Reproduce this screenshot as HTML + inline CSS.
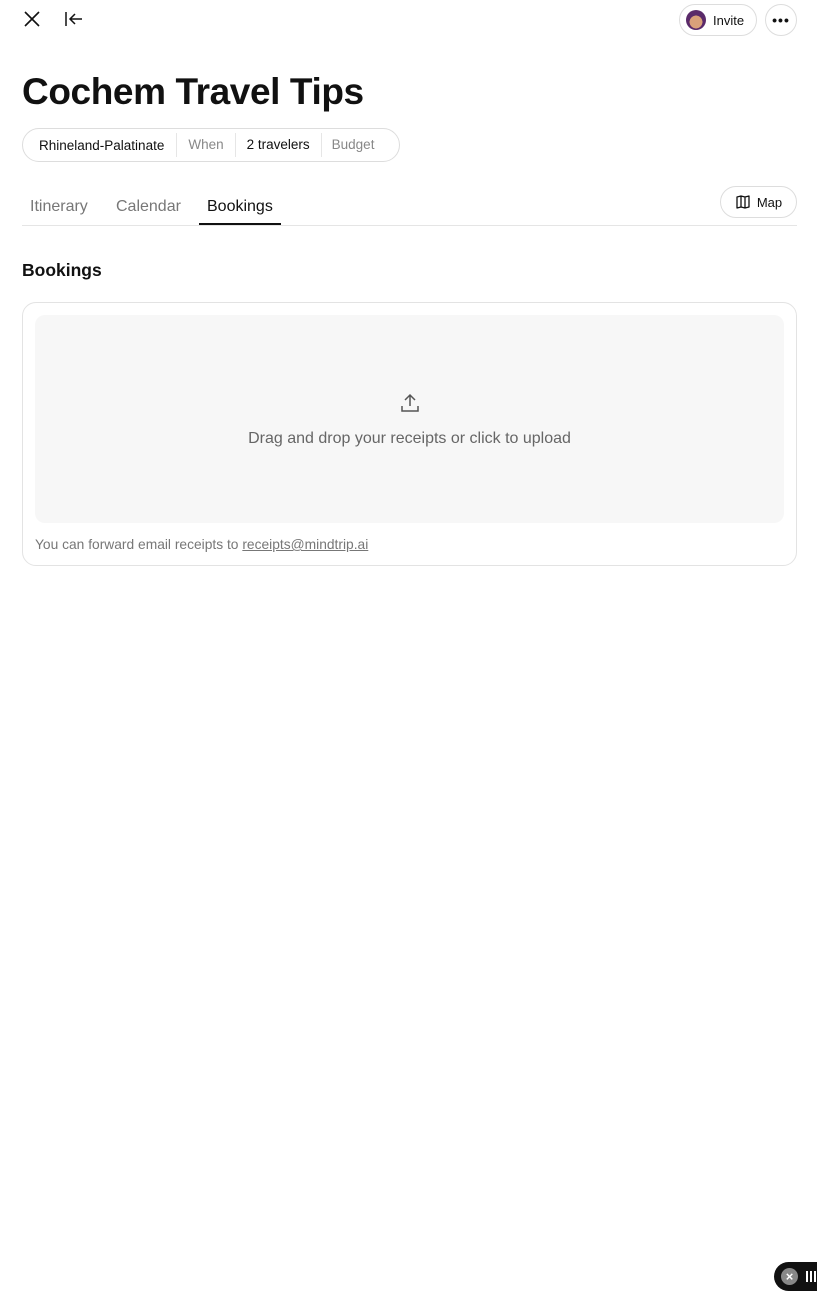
<!DOCTYPE html>
<html><head><meta charset="utf-8"><style>
*{box-sizing:border-box;margin:0;padding:0}
body{width:817px;height:1292px;background:#fff;font-family:"Liberation Sans",sans-serif;color:#111;position:relative;overflow:hidden}
.abs{position:absolute}
.pill{position:absolute;border:1px solid #ddd;border-radius:18px;background:#fff;display:flex;align-items:center}
</style></head><body>
<svg class="abs" style="left:23px;top:10px" width="18" height="18" viewBox="0 0 18 18"><path d="M2 2L16 16M16 2L2 16" stroke="#111" stroke-width="1.6" fill="none"/></svg>
<svg class="abs" style="left:64px;top:11px" width="20" height="16" viewBox="0 0 20 16"><path d="M2 1V15M18 8H6M11 3L6 8L11 13" stroke="#111" stroke-width="1.5" fill="none"/></svg>
<div class="pill" style="left:679px;top:4px;width:78px;height:32px;padding-left:6px">
<div style="width:20px;height:20px;border-radius:50%;background:radial-gradient(circle at 50% 60%,#d9a07a 40%,#5a2a6a 42%)"></div>
<span style="font-size:13px;margin-left:7px">Invite</span></div>
<div class="pill" style="left:765px;top:4px;width:32px;height:32px;justify-content:center;font-size:14px;font-weight:bold;letter-spacing:1px">•••</div>
<div class="abs" style="left:22px;top:71px;font-size:37px;font-weight:bold;letter-spacing:-0.4px">Cochem Travel Tips</div>
<div class="pill" style="left:22px;top:128px;height:34px;width:378px;border-radius:17px;font-size:13.5px;padding:0 4px">
<span style="padding:0 12px 0 12px">Rhineland-Palatinate</span>
<span style="border-left:1px solid #e6e6e6;height:24px;line-height:24px;padding:0 11px;color:#888">When</span>
<span style="border-left:1px solid #e6e6e6;height:24px;line-height:24px;padding:0 11px">2 travelers</span>
<span style="border-left:1px solid #e6e6e6;height:24px;line-height:24px;padding:0 10px;color:#888">Budget</span></div>
<div class="abs" style="left:30px;top:198px;font-size:16px;color:#777">Itinerary</div>
<div class="abs" style="left:116px;top:198px;font-size:16px;color:#777">Calendar</div>
<div class="abs" style="left:207px;top:198px;font-size:16px;color:#111">Bookings</div>
<div class="abs" style="left:22px;top:225px;width:775px;height:1px;background:#e5e5e5"></div>
<div class="abs" style="left:199px;top:223px;width:82px;height:2px;background:#111"></div>
<div class="pill" style="left:720px;top:186px;width:77px;height:32px;justify-content:center;font-size:13px">
<svg width="16" height="16" viewBox="0 0 16 16" style="margin-right:6px"><path d="M2 3L6 2L10 3L14 2V13L10 14L6 13L2 14Z M6 2V13 M10 3V14" stroke="#111" stroke-width="1.3" fill="none" stroke-linejoin="round"/></svg>Map</div>
<div class="abs" style="left:22px;top:260px;font-size:17.5px;font-weight:bold">Bookings</div>
<div class="abs" style="left:22px;top:302px;width:775px;height:264px;border:1px solid #e3e3e3;border-radius:14px"></div>
<div class="abs" style="left:35px;top:315px;width:749px;height:208px;background:#f7f7f7;border-radius:10px"></div>
<svg class="abs" style="left:399px;top:392px" width="22" height="22" viewBox="0 0 22 22"><path d="M11 14V3M6 8L11 3L16 8M3 14V19H19V14" stroke="#555" stroke-width="1.5" fill="none"/></svg>
<div class="abs" style="left:35px;top:430px;width:749px;text-align:center;font-size:16px;color:#666">Drag and drop your receipts or click to upload</div>
<div class="abs" style="left:35px;top:537px;font-size:13.8px;color:#777">You can forward email receipts to <span style="text-decoration:underline">receipts@mindtrip.ai</span></div>
<div class="abs" style="left:774px;top:1262px;width:60px;height:29px;background:#111;border-radius:15px"></div>
<div class="abs" style="left:781px;top:1268px;width:17px;height:17px;border-radius:50%;background:#888;color:#fff;font-size:13px;line-height:17px;text-align:center;font-weight:bold">×</div>
<div class="abs" style="left:806px;top:1271px;width:2px;height:11px;background:#fff"></div>
<div class="abs" style="left:810px;top:1271px;width:2px;height:11px;background:#fff"></div>
<div class="abs" style="left:814px;top:1271px;width:2px;height:11px;background:#fff"></div>
</body></html>
